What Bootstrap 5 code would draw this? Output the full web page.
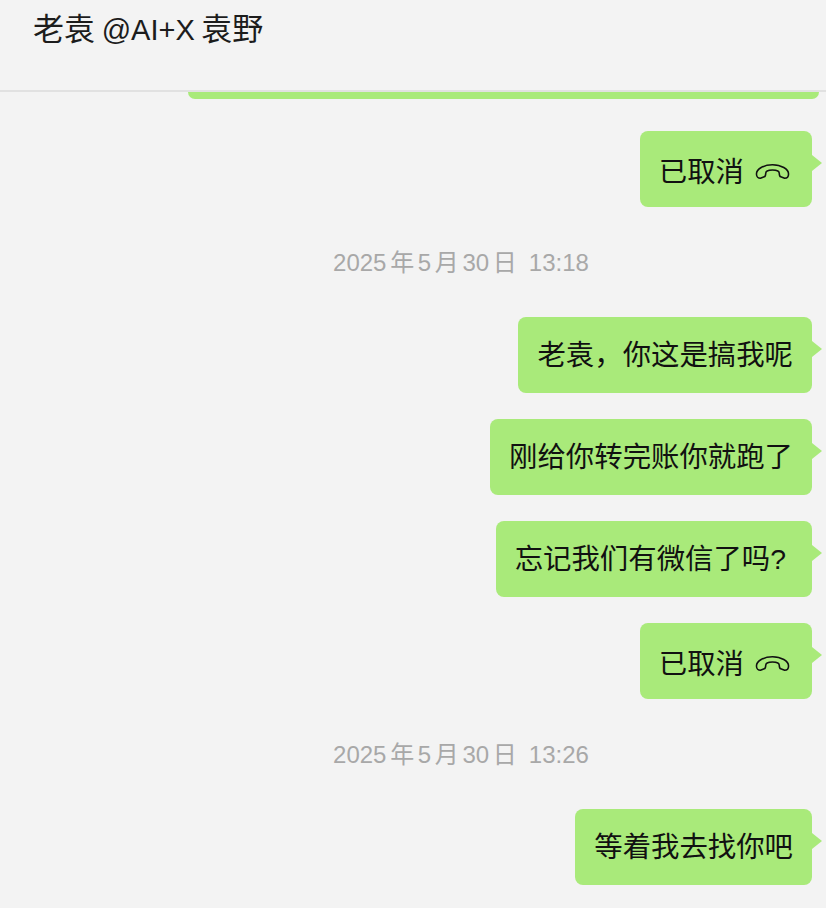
<!DOCTYPE html>
<html lang="zh">
<head>
  <meta charset="UTF-8" />
  <meta name="viewport" content="width=device-width, initial-scale=1.0" />
  <title>老袁 @AI+X 袁野</title>
  <link href="https://cdn.jsdelivr.net/npm/bootstrap@5.3.0/dist/css/bootstrap.min.css" rel="stylesheet">
  <style>
    body {
      background-color: #f3f3f3;
      font-family: "Liberation Sans", "Noto Sans CJK SC", sans-serif;
      height: 908px;
      overflow: hidden;
    }
    .chat-head {
      height: 92px;
      padding: 11px 33px 0;
      font-size: 31px;
      line-height: 38px;
      word-spacing: -2px;
      color: #1c1c1c;
      border-bottom: 2px solid #e1e1e1;
    }
    .chat-head span {
      font-size: 29px;
    }
    .cut-bubble {
      height: 7px;
      margin-left: 188px;
      margin-right: 7px;
      background-color: #a9ea7a;
      border-radius: 0 0 9px 9px;
    }
    .chat-body {
      padding-right: 14px;
      padding-top: 32px;
    }
    .bubble {
      position: relative;
      height: 76px;
      padding: 0 19px;
      margin-bottom: 26px;
      font-size: 28.4px;
      line-height: 76px;
      color: #111;
      background-color: #a9ea7a;
      border-radius: 8px;
      white-space: nowrap;
    }
    .bubble::after {
      content: "";
      position: absolute;
      top: 24px;
      left: 100%;
      border-left: 10px solid #a9ea7a;
      border-top: 8px solid transparent;
      border-bottom: 8px solid transparent;
    }
    .call-bubble {
      padding-right: 22px;
      padding-top: 5px;
    }
    .qmark {
      margin-right: 7px;
    }
    .stamp {
      height: 26px;
      margin: 17px 0 41px;
      padding-left: 110px;
      font-size: 24px;
      line-height: 26px;
      word-spacing: -3px;
      color: #a8a8a8;
      text-align: center;
    }
    .hangup {
      width: 35px;
      height: 17px;
      margin-left: 11px;
    }
  </style>
</head>
<body>
  <div class="chat-head">老袁 <span>@AI+X</span> 袁野</div>
  <div class="cut-bubble"></div>
  <div class="chat-body d-flex flex-column">
    <div class="bubble call-bubble align-self-end d-flex align-items-center">已取消
      <svg class="hangup" viewBox="0 0 36 17" fill="none" stroke="#111" stroke-width="1.6" stroke-linejoin="round"><path d="M1.5 11C1.5 6 9 1.5 18 1.5S34.500 6 34.500 11C34.500 14 32.500 15.500 30.500 15.500L26.500 14C25 13.500 25 12 25 10.500C25 8 21 7 18 7S11 8 11 10.500C11 12 11 13.500 9.500 14L5.500 15.500C3.500 15.500 1.500 14 1.500 11Z"/></svg>
    </div>
    <div class="stamp">2025 年 5 月 30 日&ensp;13:18</div>
    <div class="bubble align-self-end">老袁，你这是搞我呢</div>
    <div class="bubble align-self-end">刚给你转完账你就跑了</div>
    <div class="bubble align-self-end">忘记我们有微信了吗<span class="qmark">?</span></div>
    <div class="bubble call-bubble align-self-end d-flex align-items-center">已取消
      <svg class="hangup" viewBox="0 0 36 17" fill="none" stroke="#111" stroke-width="1.6" stroke-linejoin="round"><path d="M1.5 11C1.5 6 9 1.5 18 1.5S34.500 6 34.500 11C34.500 14 32.500 15.500 30.500 15.500L26.500 14C25 13.500 25 12 25 10.500C25 8 21 7 18 7S11 8 11 10.500C11 12 11 13.500 9.500 14L5.500 15.500C3.500 15.500 1.500 14 1.500 11Z"/></svg>
    </div>
    <div class="stamp">2025 年 5 月 30 日&ensp;13:26</div>
    <div class="bubble align-self-end">等着我去找你吧</div>
  </div>
  <script src="https://cdn.jsdelivr.net/npm/bootstrap@5.3.0/dist/js/bootstrap.bundle.min.js"></script>
</body>
</html>
